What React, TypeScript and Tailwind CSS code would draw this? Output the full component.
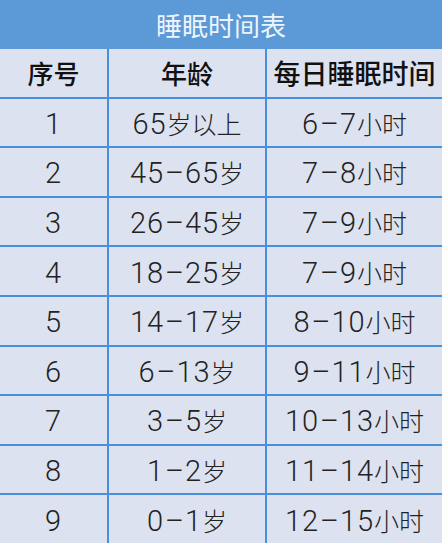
import React from "react";

const rows = [
  ["1", "65岁以上", "6-7小时"],
  ["2", "45-65岁", "7-8小时"],
  ["3", "26-45岁", "7-9小时"],
  ["4", "18-25岁", "7-9小时"],
  ["5", "14-17岁", "8-10小时"],
  ["6", "6-13岁", "9-11小时"],
  ["7", "3-5岁", "10-13小时"],
  ["8", "1-2岁", "11-14小时"],
  ["9", "0-1岁", "12-15小时"],
];

// digits come out larger and in a Latin face, CJK stays in Noto CJK
function Mixed({ text }: { text: string }) {
  const parts = text.split(/(\d+|-)/).filter(Boolean);
  return (
    <span className="inline-flex items-baseline leading-none">
      {parts.map((p, i) =>
        p === "-" ? (
          <span key={i} className="font-['Roboto'] text-[29px] font-light mx-[1px]">
            –
          </span>
        ) : /\d/.test(p) ? (
          <span key={i} className="font-['Roboto'] text-[29px] font-light tracking-[1px]">
            {p}
          </span>
        ) : (
          <span key={i} className="text-[25px] font-light">
            {p}
          </span>
        )
      )}
    </span>
  );
}

export default function App() {
  return (
    <div
      className="w-[442px] h-[543px] flex flex-col bg-[#dde2f0] overflow-hidden"
      style={{ fontFamily: '"Noto Sans CJK SC", "Noto Sans", sans-serif' }}
    >
      {/* Title */}
      <div className="h-[49px] shrink-0 bg-[#5b9ad6] flex items-center justify-center text-[26px] text-[#eef4fb] leading-none">
        睡眠时间表
      </div>

      {/* Table */}
      <div className="flex-1 min-h-0 grid grid-cols-[107px_156px_175px] grid-rows-10 gap-[2px] bg-[#4a8fdc]">
        <div className="min-h-0 bg-[#dde2f0] flex items-center justify-center text-[26px] leading-none font-medium text-[#111]">序号</div>
        <div className="min-h-0 bg-[#dde2f0] flex items-center justify-center text-[26px] leading-none font-medium text-[#111]">年龄</div>
        <div className="min-h-0 bg-[#dde2f0] flex items-center justify-center text-[27px] leading-none font-medium text-[#111]">每日睡眠时间</div>
        {rows.map((r) => (
          <React.Fragment key={r[0]}>
            <div className="min-h-0 bg-[#dde2f0] flex items-center justify-center pt-[4px] text-[#222]">
              <Mixed text={r[0]} />
            </div>
            <div className="min-h-0 bg-[#dde2f0] flex items-center justify-center pt-[4px] text-[#222]">
              <Mixed text={r[1]} />
            </div>
            <div className="min-h-0 bg-[#dde2f0] flex items-center justify-center pt-[4px] text-[#222]">
              <Mixed text={r[2]} />
            </div>
          </React.Fragment>
        ))}
      </div>
    </div>
  );
}
